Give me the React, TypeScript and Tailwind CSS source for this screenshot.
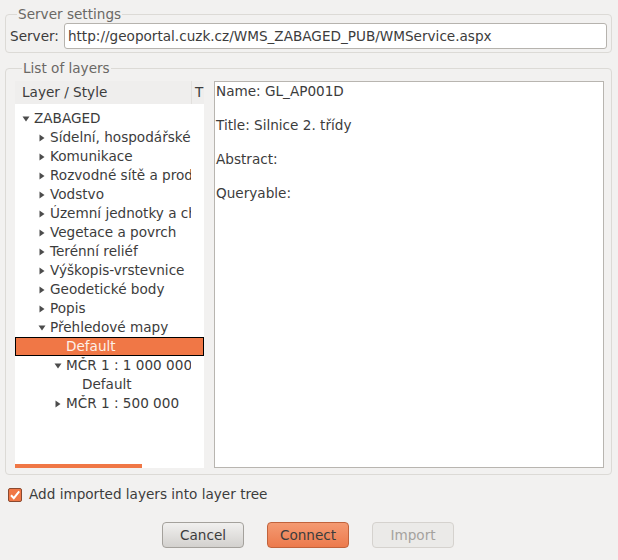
import React from 'react'

type Node = {
  label: string
  depth: number
  arrow?: 'right' | 'down'
  selected?: boolean
}

const ROWS: Node[] = [
  { label: 'ZABAGED', depth: 0, arrow: 'down' },
  { label: 'Sídelní, hospodářské a kulturní objekty', depth: 1, arrow: 'right' },
  { label: 'Komunikace', depth: 1, arrow: 'right' },
  { label: 'Rozvodné sítě a produktovody', depth: 1, arrow: 'right' },
  { label: 'Vodstvo', depth: 1, arrow: 'right' },
  { label: 'Územní jednotky a chráněná území', depth: 1, arrow: 'right' },
  { label: 'Vegetace a povrch', depth: 1, arrow: 'right' },
  { label: 'Terénní reliéf', depth: 1, arrow: 'right' },
  { label: 'Výškopis-vrstevnice', depth: 1, arrow: 'right' },
  { label: 'Geodetické body', depth: 1, arrow: 'right' },
  { label: 'Popis', depth: 1, arrow: 'right' },
  { label: 'Přehledové mapy', depth: 1, arrow: 'down' },
  { label: 'Default', depth: 2, selected: true },
  { label: 'MČR 1 : 1 000 000', depth: 2, arrow: 'down' },
  { label: 'Default', depth: 3 },
  { label: 'MČR 1 : 500 000', depth: 2, arrow: 'right' },
]

function Arrow({ dir }: { dir: 'right' | 'down' }) {
  return (
    <svg width="8" height="8" viewBox="0 0 8 8" className="shrink-0" aria-hidden="true">
      {dir === 'right' ? (
        <polygon points="1.5,0.5 6.5,4 1.5,7.5" fill="#4c4c4c" />
      ) : (
        <polygon points="0.5,1.5 7.5,1.5 4,6.5" fill="#4c4c4c" />
      )}
    </svg>
  )
}

// One tree row; the label is clipped at the first column's edge, the selection spans the row.
function TreeRow({ node }: { node: Node }) {
  const pad = 7 + node.depth * 16
  return (
    <div
      className={
        node.selected
          ? 'h-[19px] border border-black bg-[#f07746] text-[#fdf0e9]'
          : 'h-[19px] border border-transparent text-[#3c3c3c]'
      }
    >
      <div className="flex h-full w-[175px] items-center overflow-hidden whitespace-nowrap" style={{ paddingLeft: pad - 1 }}>
        <span className="flex w-[12px] shrink-0 items-center">{node.arrow && <Arrow dir={node.arrow} />}</span>
        <span>{node.label}</span>
      </div>
    </div>
  )
}

function Button({ children, kind }: { children: React.ReactNode; kind: 'normal' | 'default' | 'disabled' }) {
  const cls =
    kind === 'default'
      ? 'border-[#c1633c] bg-gradient-to-b from-[#f49a72] to-[#ec7a4c] text-[#3c3c3c]'
      : kind === 'disabled'
        ? 'border-[#d5d2ce] bg-[#ebeae8] text-[#a5a29e]'
        : 'border-[#a4a19c] bg-gradient-to-b from-[#f1f0ef] to-[#d3d1ce] text-[#3c3c3c]'
  return (
    <button
      type="button"
      className={`flex h-[26px] w-[82px] items-center justify-center rounded-[4px] border ${cls}`}
    >
      {children}
    </button>
  )
}

export default function App() {
  return (
    <div
      className="relative h-[560px] w-[618px] overflow-hidden bg-[#f2f1f0] text-[13.6px] leading-[15px] text-[#3c3c3c]"
      style={{ fontFamily: '"DejaVu Sans", "Open Sans", sans-serif' }}
    >
      <div className="px-[5px] pt-[7px] pr-[6px]">
        {/* Server settings */}
        <fieldset className="rounded-[4px] border border-[#dcdad6] px-[4px] pb-[3px]">
          <legend className="ml-[7px] px-[1px] text-[#6a6865]">Server settings</legend>
          <div className="flex items-center gap-[5px] pt-[1px]">
            <span>Server:</span>
            <div className="flex h-[26px] flex-1 items-center rounded-[3px] border border-[#b6b3ae] bg-white px-[3px] text-[#3c3c3c]">
              http://geoportal.cuzk.cz/WMS_ZABAGED_PUB/WMService.aspx
            </div>
          </div>
        </fieldset>

        {/* List of layers */}
        <fieldset className="mt-[8px] rounded-[4px] border border-[#dcdad6] pb-[6px] pl-[9px] pr-[7px]">
          <legend className="ml-[7px] px-[1px] text-[#6a6865]">List of layers</legend>
          <div className="flex h-[392px] gap-[10px] pt-[5px]">
            <div className="flex w-[189px] shrink-0 flex-col overflow-hidden bg-white">
              <div className="flex h-[23px] shrink-0 items-center overflow-hidden bg-[#efeeed]">
                <span className="w-[176px] shrink-0 pl-[7px]">Layer / Style</span>
                <span className="h-full w-px shrink-0 bg-[#e2e0dd]" />
                <span className="pl-[3px]">T</span>
              </div>
              <div className="relative flex-1 overflow-hidden pt-[5px]">
                {ROWS.map((n, i) => (
                  <TreeRow key={i} node={n} />
                ))}
                <div className="absolute bottom-0 left-0 h-[4px] w-[127px] bg-[#f07746]" />
              </div>
            </div>
            <div className="flex-1 border border-[#b8b5b0] bg-white px-[1px] pt-[2px] text-[#3c3c3c]">
              <p className="h-[34px]">Name: GL_AP001D</p>
              <p className="h-[34px]">Title: Silnice 2. třídy</p>
              <p className="h-[34px]">Abstract:</p>
              <p>Queryable:</p>
            </div>
          </div>
        </fieldset>
      </div>

      {/* Checkbox */}
      <div className="ml-[8px] mt-[12px] flex items-center gap-[7px]">
        <span className="flex h-[14px] w-[14px] items-center justify-center rounded-[2px] border border-[#8a4a30] bg-[#f07746]">
          <svg width="12" height="12" viewBox="0 0 12 12" aria-hidden="true">
            <path d="M2 6.2 L4.8 9.2 L10.2 2.4" fill="none" stroke="#fff" strokeWidth="2" />
          </svg>
        </span>
        <span>Add imported layers into layer tree</span>
      </div>

      {/* Buttons */}
      <div className="ml-[162px] mt-[20px] flex gap-[23px]">
        <Button kind="normal">Cancel</Button>
        <Button kind="default">Connect</Button>
        <Button kind="disabled">Import</Button>
      </div>
    </div>
  )
}
